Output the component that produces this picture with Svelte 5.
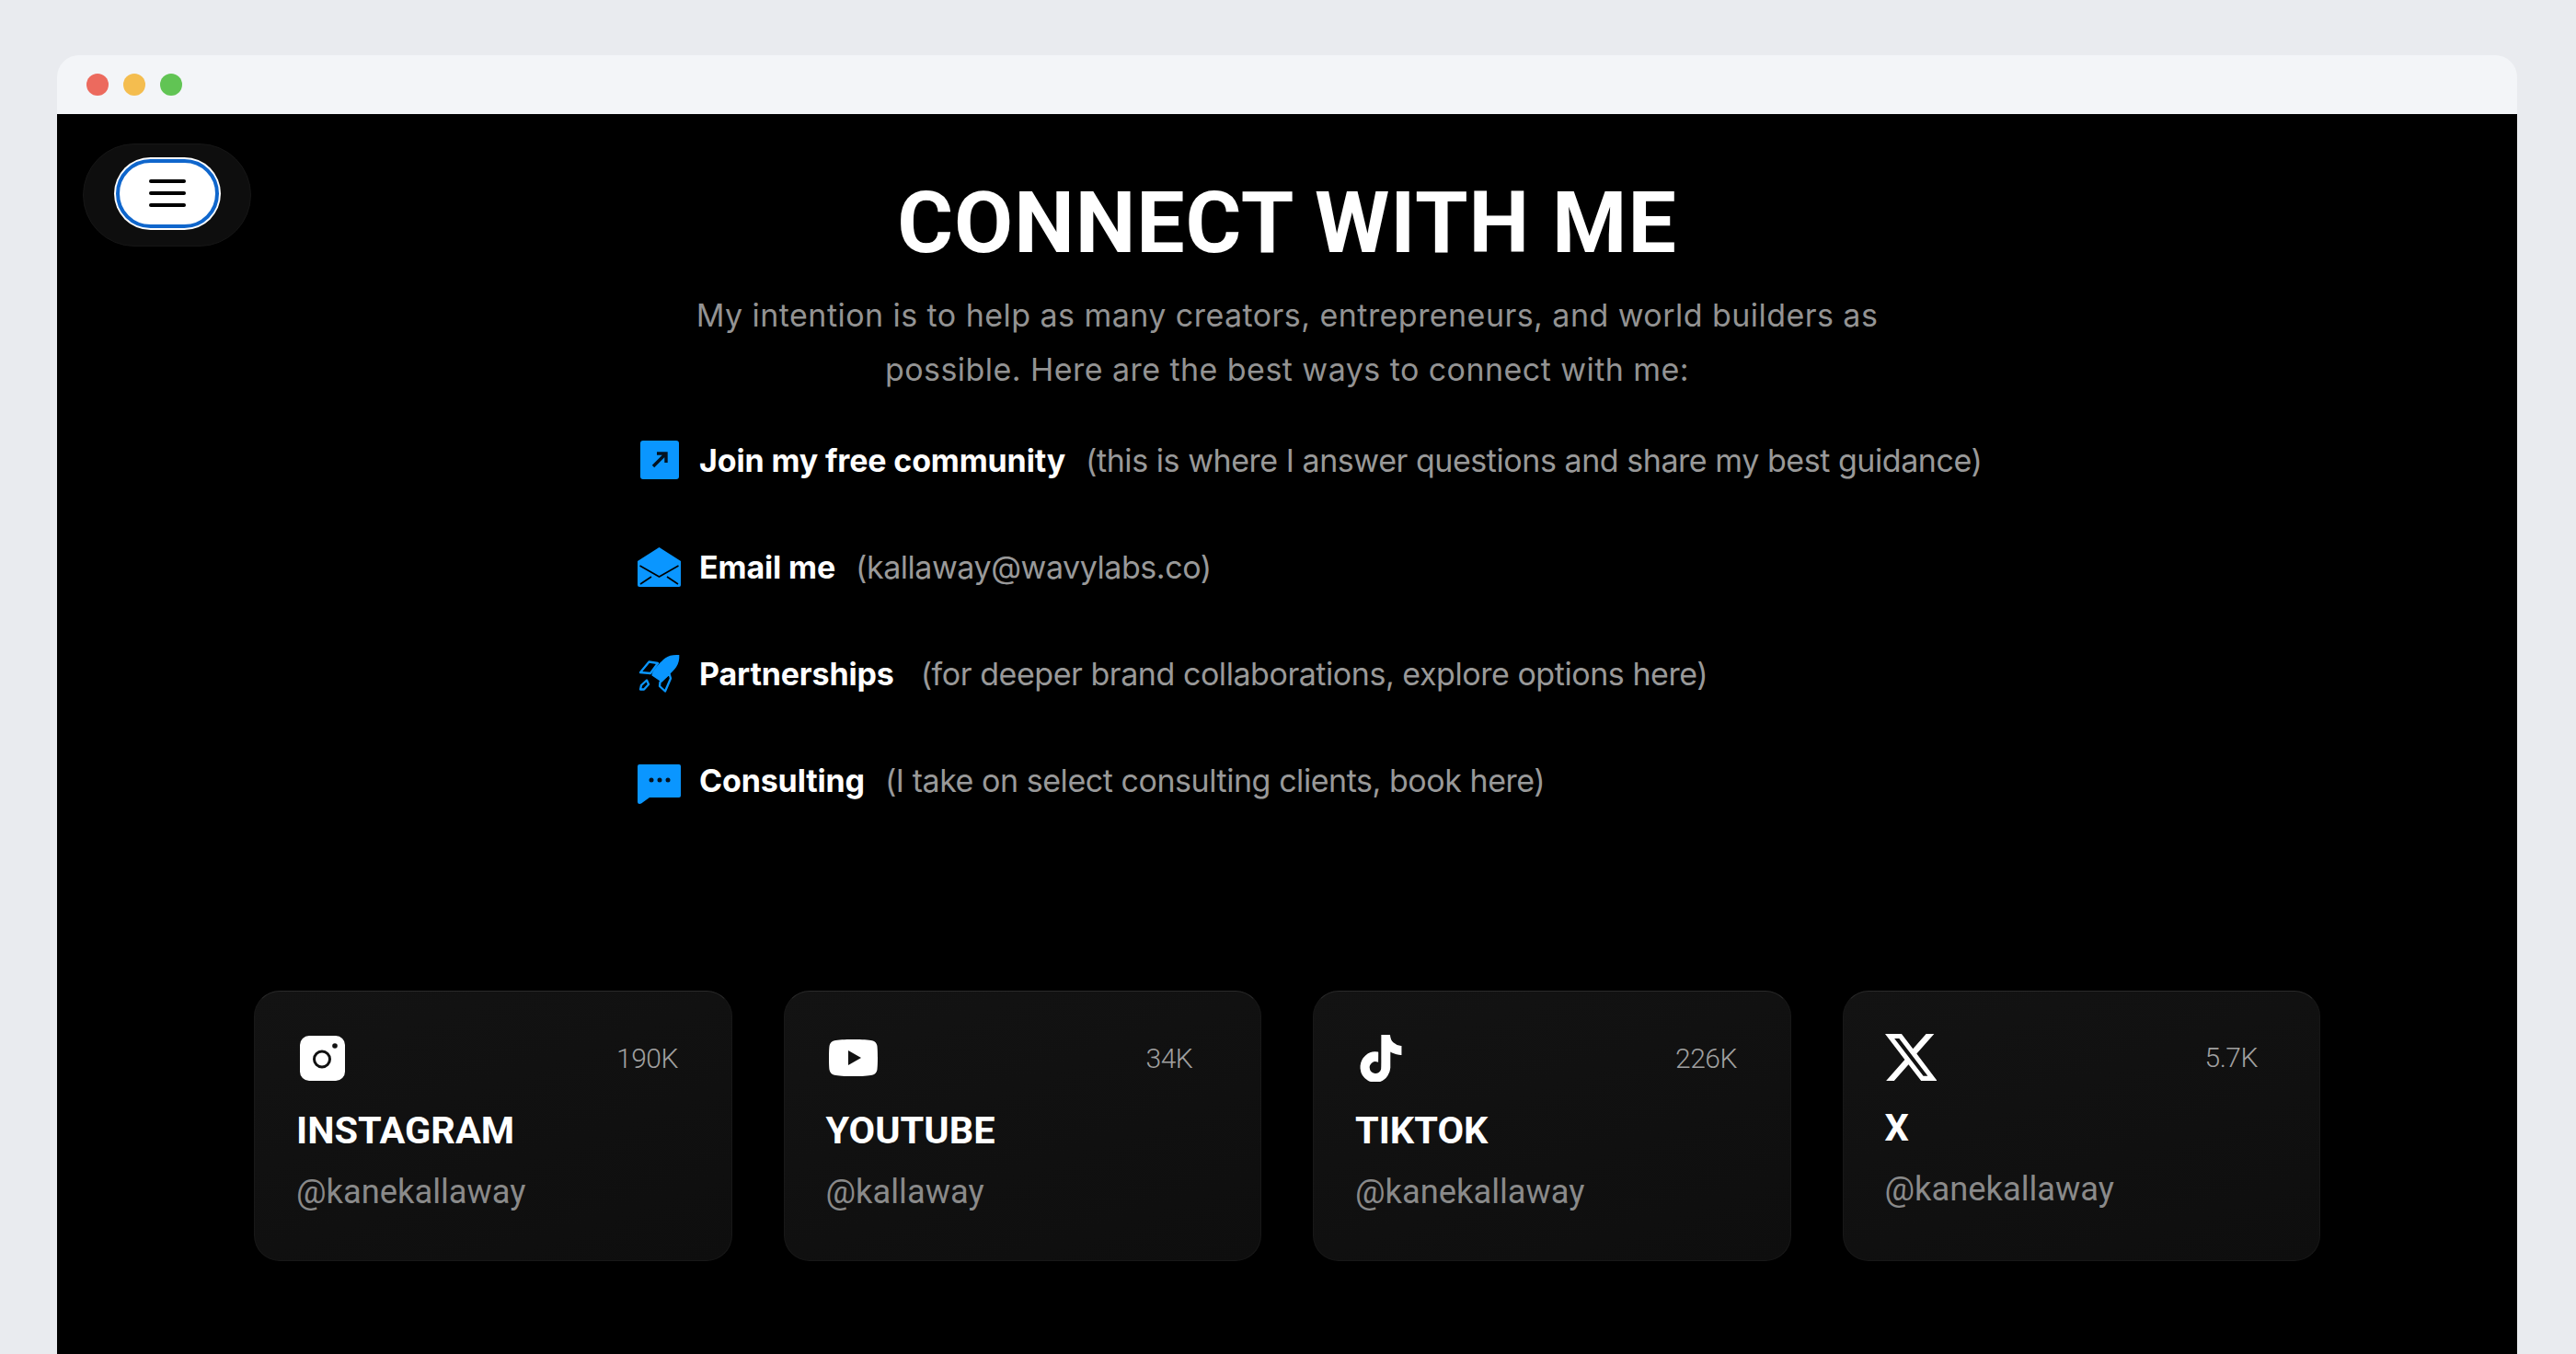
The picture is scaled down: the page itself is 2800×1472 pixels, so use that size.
<script>
  const links = [
    { icon: 'arrow', title: 'Join my free community', note: '(this is where I answer questions and share my best guidance)', gap: 'wide' },
    { icon: 'mail', title: 'Email me', note: '(kallaway@wavylabs.co)', gap: 'wide' },
    { icon: 'rocket', title: 'Partnerships', note: '(for deeper brand collaborations, explore options here)', gap: 'wider' },
    { icon: 'chat', title: 'Consulting', note: '(I take on select consulting clients, book here)', gap: 'wide' }
  ];

  const socials = [
    { icon: 'instagram', name: 'Instagram', count: '190K', handle: '@kanekallaway' },
    { icon: 'youtube', name: 'YouTube', count: '34K', handle: '@kallaway' },
    { icon: 'tiktok', name: 'TikTok', count: '226K', handle: '@kanekallaway' },
    { icon: 'x', name: 'X', count: '5.7K', handle: '@kanekallaway' }
  ];
</script>

<div class="page">
  <div class="window">
    <div class="titlebar">
      <span class="dot red"></span>
      <span class="dot yellow"></span>
      <span class="dot green"></span>
    </div>

    <main class="content">
      <div class="nav">
        <button class="menu" aria-label="Menu">
          <span></span><span></span><span></span>
        </button>
      </div>

      <h1>Connect with me</h1>
      <p class="intro">My intention is to help as many creators, entrepreneurs, and world builders as possible. Here are the best ways to connect with me:</p>

      <ul class="links">
        {#each links as link}
          <li class="link">
            <span class="link-icon">
              {#if link.icon === 'arrow'}
                <svg width="42" height="42" viewBox="0 0 42 42">
                  <rect width="42" height="42" rx="3" fill="#0a96ff" />
                  <path d="M14 28 27 15M18 14h10v10" fill="none" stroke="#04121f" stroke-width="3.400" />
                </svg>
              {:else if link.icon === 'mail'}
                <svg width="47" height="43" viewBox="0 0 47 43">
                  <path d="M23.500 0 47 15v26a2 2 0 0 1-2 2H2a2 2 0 0 1-2-2V15z" fill="#0a96ff" />
                  <path d="M2.500 20 23.500 32 44.500 20M3 40l12-8M44 40l-12-8" fill="none" stroke="#000" stroke-width="1.600" />
                </svg>
              {:else if link.icon === 'rocket'}
                <svg width="46" height="44" viewBox="0 0 46 44">
                  <path d="M44.300 2C38 1.500 33 2.500 29 5.500 24 9.500 18 16 15.300 21l-1 3.300 11 7.400 7.400-7.400c3-3 6.300-5.800 8.300-9 2.600-4 3.600-8.500 3.300-13.300z" fill="#0a96ff" />
                  <path d="M2 21 11.500 9.500 21 11 13 22zM23.500 31.500 33.500 22.500 35 27.500 29 41.500 23 36zM2 39.500l1-4.500 6-5.500 2 4.500-5 5.500z" fill="none" stroke="#0a96ff" stroke-width="2.300" stroke-linejoin="round" />
                </svg>
              {:else if link.icon === 'chat'}
                <svg class="chat" width="47" height="43" viewBox="0 0 47 43">
                  <path d="M2 0h43a2 2 0 0 1 2 2v32a2 2 0 0 1-2 2H13l-9 6.500c-2 1-4 .5-4-2V2a2 2 0 0 1 2-2z" fill="#0a96ff" />
                  <circle cx="15" cy="17" r="2.500" fill="#04121f" />
                  <circle cx="24" cy="17" r="2.500" fill="#04121f" />
                  <circle cx="33" cy="17" r="2.500" fill="#04121f" />
                </svg>
              {/if}
            </span>
            <strong>{link.title}</strong>
            <span class="note {link.gap}">{link.note}</span>
          </li>
        {/each}
      </ul>

      <section class="cards">
        {#each socials as item}
          <article class="card">
            <div class="card-top" class:short={item.icon === 'x'}>
              <span class="card-icon">
                {#if item.icon === 'instagram'}
                  <svg class="ig" width="49" height="49" viewBox="0 0 49 49">
                    <rect width="49" height="49" rx="10" fill="#fff" />
                    <circle cx="24" cy="25.500" r="8.500" fill="none" stroke="#111" stroke-width="3" />
                    <circle cx="38" cy="11" r="2.800" fill="#111" />
                  </svg>
                {:else if item.icon === 'youtube'}
                  <svg width="53" height="40" viewBox="0 0 53 40">
                    <path d="M26.500 0C36 0 43 .4 47 1.300c3 .8 5 3 5.400 5.500.8 4.200.8 22.200 0 26.400-.4 2.500-2.400 4.700-5.400 5.500-4 .9-11 1.300-20.500 1.300S10 39.600 6 38.700c-3-.8-5-3-5.400-5.500-.8-4.200-.8-22.200 0-26.400C1 4.300 3 2.100 6 1.300 10 .4 17 0 26.500 0z" fill="#fff" />
                    <path d="M21 12v16l14-8z" fill="#111" />
                  </svg>
                {:else if item.icon === 'tiktok'}
                  <svg width="50" height="51" viewBox="0 0 24 24" preserveAspectRatio="none">
                    <path d="M12.525.020c1.310-.020 2.610-.010 3.910-.020.080 1.530.630 3.090 1.750 4.170 1.120 1.110 2.700 1.620 4.240 1.790v4.030c-1.440-.050-2.890-.350-4.200-.970-.570-.260-1.100-.590-1.620-.930-.010 2.920.010 5.840-.020 8.750-.080 1.400-.540 2.790-1.350 3.940-1.310 1.920-3.580 3.170-5.910 3.210-1.430.080-2.860-.310-4.080-1.030-2.020-1.190-3.440-3.370-3.650-5.710-.020-.500-.030-1-.010-1.490.180-1.900 1.120-3.720 2.580-4.960 1.660-1.440 3.980-2.130 6.150-1.720.020 1.480-.040 2.960-.040 4.440-.990-.320-2.150-.230-3.020.370-.630.410-1.110 1.040-1.360 1.750-.210.510-.150 1.070-.140 1.610.240 1.640 1.820 3.020 3.500 2.870 1.120-.010 2.190-.660 2.770-1.610.190-.330.400-.670.410-1.060.100-1.790.060-3.570.070-5.360.010-4.030-.010-8.050.020-12.070z" fill="#fff" stroke="#fff" stroke-width="0.700" />
                  </svg>
                {:else if item.icon === 'x'}
                  <svg class="xlogo" width="56" height="51" viewBox="1.250 2.250 21.330 19.500" preserveAspectRatio="none">
                    <path d="M18.244 2.250h3.308l-7.227 8.260 8.502 11.240H16.170l-5.214-6.817L4.990 21.750H1.680l7.730-8.835L1.254 2.250H8.080l4.713 6.231zm-1.161 17.520h1.833L7.084 4.126H5.117z" fill="#fff" />
                  </svg>
                {/if}
              </span>
              <span class="count">{item.count}</span>
            </div>
            <h2>{item.name}</h2>
            <p class="handle">{item.handle}</p>
          </article>
        {/each}
      </section>
    </main>
  </div>
</div>

<style>
  :global(body) {
    margin: 0;
    background: #e9ebef;
  }

  .page {
    height: 1472px;
    padding: 60px 64px 0 62px;
    box-sizing: border-box;
    overflow: hidden;
    background: #e9ebef;
  }

  .window {
    height: 100%;
    display: flex;
    flex-direction: column;
  }

  .titlebar {
    flex: 0 0 64px;
    display: flex;
    align-items: center;
    gap: 16px;
    padding-left: 32px;
    padding-bottom: 1px;
    box-sizing: border-box;
    background: #f3f5f8;
    border-radius: 24px 24px 0 0;
  }

  .dot {
    width: 24px;
    height: 24px;
    border-radius: 50%;
  }

  .red { background: #ec6a5e; }
  .yellow { background: #f4bd4f; }
  .green { background: #61c454; }

  .content {
    flex: 1;
    position: relative;
    background: #000;
    display: flex;
    flex-direction: column;
    align-items: center;
    padding-top: 64px;
    color: #fff;
  }

  .nav {
    position: absolute;
    left: 28px;
    top: 32px;
    width: 183px;
    height: 112px;
    border-radius: 56px;
    background: #0e0e0e;
    border: 1px solid #161616;
    box-sizing: border-box;
    display: flex;
    align-items: center;
    justify-content: center;
  }

  .menu {
    width: 112px;
    height: 75px;
    margin-bottom: 4px;
    border-radius: 38px;
    box-sizing: border-box;
    background: #fff;
    border: 4px solid #0f66cc;
    box-shadow: 0 0 0 2px #fff;
    padding: 0;
    display: flex;
    flex-direction: column;
    align-items: center;
    justify-content: center;
    gap: 9px;
  }

  .menu span {
    width: 40px;
    height: 4px;
    border-radius: 2px;
    background: #000;
  }

  h1 {
    margin: 0;
    font-family: Roboto, "Liberation Sans", sans-serif;
    font-weight: 700;
    font-size: 93px;
    line-height: 110px;
    letter-spacing: 0.9px;
    text-transform: uppercase;
    text-align: center;
  }

  .intro {
    width: 1300px;
    margin: 15px 0 0;
    font-family: Inter, "Liberation Sans", sans-serif;
    font-size: 34px;
    font-weight: 400;
    line-height: 59px;
    letter-spacing: 0.45px;
    text-align: center;
    color: #939393;
  }

  .links {
    list-style: none;
    align-self: flex-start;
    margin: 44px 0 0 631px;
    padding: 0;
    display: flex;
    flex-direction: column;
    gap: 66px;
  }

  .link {
    height: 50px;
    display: flex;
    align-items: center;
    font-family: Inter, "Liberation Sans", sans-serif;
    font-size: 34px;
  }

  .link-icon {
    width: 47px;
    display: flex;
    justify-content: center;
    margin-right: 20px;
  }

  .chat {
    margin-top: 8px;
  }

  .link strong {
    font-weight: 700;
    letter-spacing: -0.15px;
    color: #fff;
  }

  .note {
    color: #999;
    font-weight: 400;
    letter-spacing: -0.45px;
  }

  .note.wide { margin-left: 22px; }
  .note.wider { margin-left: 29px; }

  .cards {
    width: 2246px;
    margin-top: 204px;
    display: grid;
    grid-template-columns: repeat(4, 1fr);
    gap: 56px;
  }

  .card {
    height: 294px;
    box-sizing: border-box;
    padding: 46px 0 0 45px;
    border-radius: 28px;
    border: 1px solid #181818;
    border-top-color: #2a2a2a;
    background: linear-gradient(160deg, #131313, #0e0e0e);
  }

  .card-top {
    height: 52px;
    display: grid;
    grid-template-columns: 348px auto;
    align-items: center;
    justify-content: start;
  }

  .card-top.short {
    height: 49px;
  }

  .card-icon {
    display: flex;
    align-items: center;
    padding-left: 3px;
  }

  .ig {
    margin-left: 1px;
  }

  .xlogo {
    margin-left: -3px;
  }

  .count {
    font-family: Roboto, "Liberation Sans", sans-serif;
    font-weight: 300;
    font-size: 30px;
    letter-spacing: -0.5px;
    color: #a0a0a0;
  }

  .card h2 {
    margin: 27px 0 0;
    font-family: Roboto, "Liberation Sans", sans-serif;
    font-weight: 700;
    font-size: 41.5px;
    line-height: 52px;
    letter-spacing: 0;
    text-transform: uppercase;
    color: #fff;
  }

  .handle {
    margin: 19px 0 0;
    font-family: Roboto, "Liberation Sans", sans-serif;
    font-weight: 400;
    font-size: 36.3px;
    line-height: 44px;
    color: #8a8a8a;
  }
</style>
